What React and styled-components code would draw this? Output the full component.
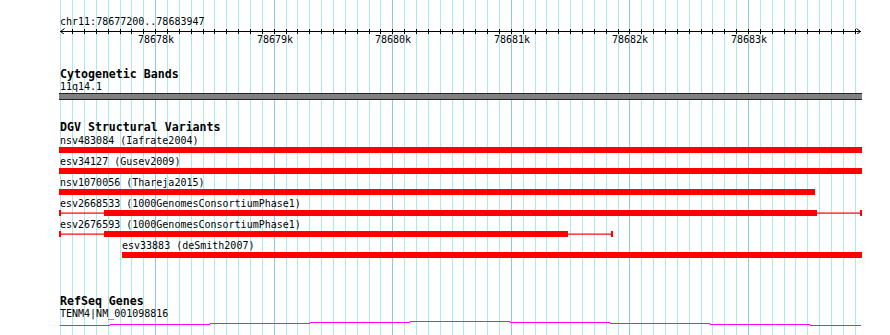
import React from 'react'
import styled, { createGlobalStyle } from 'styled-components'

const START = 78677200
const END = 78683947
const PX_PER_100 = 11.857

const GlobalStyle = createGlobalStyle`
  html, body { margin: 0; padding: 0; background: #fff; }
`

const Page = styled.div`
  position: relative;
  width: 890px;
  height: 335px;
  overflow: hidden;
  background: #fff;
  font-family: "DejaVu Sans Mono", "Liberation Mono", monospace;
  font-size: 10px;
  color: #000;
`
const Grid = styled.svg`
  position: absolute;
  left: 0;
  top: 0;
  z-index: 0;
`
const Content = styled.div`
  position: relative;
  z-index: 1;
  display: flex;
  flex-direction: column;
  padding: 16px 0 0 59px;
  width: 803px;
`
const Locus = styled.div`
  line-height: 12px;
  height: 12px;
  padding-left: 1px;
  white-space: nowrap;
`
const Axis = styled.svg`
  display: block;
`
const ScaleLabels = styled.div`
  position: relative;
  height: 12px;
  line-height: 12px;
`
const ScaleLabel = styled.span`
  position: absolute;
  top: 0;
  width: 36px;
  text-align: center;
  white-space: nowrap;
`
const Track = styled.section`
  display: flex;
  flex-direction: column;
  margin-top: ${p => p.$gap}px;
`
const TrackTitle = styled.h3`
  margin: 0;
  padding-left: 1px;
  font-size: 11.6px;
  font-weight: bold;
  line-height: 14px;
  height: 14px;
  white-space: nowrap;
`
const Feature = styled.div`
  display: flex;
  flex-direction: column;
  padding-bottom: ${p => p.$after || 0}px;
`
const FeatureLabel = styled.div`
  line-height: 12px;
  height: 12px;
  padding-left: ${p => 1 + (p.$indent || 0)}px;
  white-space: nowrap;
`
const BandBar = styled.div`
  height: 5px;
  background: #808080;
  border-top: 1px solid #222;
  border-bottom: 1px solid #222;
`
const Glyph = styled.svg`
  display: block;
`

const gridX = k => Math.round(60.3 + k * PX_PER_100)

const Gridlines = () => {
  const lines = []
  for (let k = 0; k <= 67; k++) {
    const major = (START + k * 100) % 1000 === 0
    const x = gridX(k) + 0.5
    lines.push(
      <line key={k} x1={x} x2={x} y1={0} y2={335} stroke={major ? '#8ec6e6' : '#ace8ee'} strokeWidth={1} />
    )
  }
  return (
    <Grid width="890" height="335">
      {lines}
    </Grid>
  )
}

const Ruler = () => {
  const ticks = []
  const labels = []
  for (let k = 1; k <= 67; k++) {
    const x = gridX(k) - 59 + 0.5
    ticks.push(<line key={k} x1={x} x2={x} y1={1} y2={6} stroke="#000" />)
    const bp = START + k * 100
    if (bp % 1000 === 0) {
      labels.push(
        <ScaleLabel key={bp} style={{ left: gridX(k) - 59 - 17 }}>
          {bp / 1000}k
        </ScaleLabel>
      )
    }
  }
  return (
    <>
      <Locus>chr11:{START}..{END}</Locus>
      <Axis width="803" height="6">
        <line x1={1} x2={802} y1={3.5} y2={3.5} stroke="#000" />
        {ticks}
        <polyline points="5.5,0.5 1.5,3.5 5.5,6.5" fill="none" stroke="#000" />
        <polyline points="797.5,0.5 801.5,3.5 797.5,6.5" fill="none" stroke="#000" />
      </Axis>
      <ScaleLabels>{labels}</ScaleLabels>
    </>
  )
}

// pixel spans relative to x=59
const variants = [
  { name: 'nsv483084 (Iafrate2004)', thick: [0, 803] },
  { name: 'esv34127 (Gusev2009)', thick: [0, 803] },
  { name: 'nsv1070056 (Thareja2015)', thick: [0, 756] },
  { name: 'esv2668533 (1000GenomesConsortiumPhase1)', thin: [0, 803], thick: [45, 758] },
  { name: 'esv2676593 (1000GenomesConsortiumPhase1)', thin: [0, 554], thick: [45, 509] },
  { name: 'esv33883 (deSmith2007)', thick: [63, 803], indent: 62 },
]

const VariantGlyph = ({ thin, thick }) => (
  <Glyph width="803" height="6">
    {thin && (
      <>
        <rect x={thin[0]} y={2.5} width={thin[1] - thin[0]} height={1.2} fill="#ff0000" />
        <rect x={thin[0]} y={0} width={2} height={6} fill="#ff0000" />
        <rect x={thin[1] - 2} y={0} width={2} height={6} fill="#ff0000" />
      </>
    )}
    <rect x={thick[0]} y={0} width={thick[1] - thick[0]} height={6} fill="#ff0000" />
  </Glyph>
)

const geneSteps = [
  [1, 51, 324], [51, 151, 323], [151, 251, 322], [251, 351, 321], [351, 451, 320],
  [451, 551, 321], [551, 651, 322], [651, 751, 323], [751, 802, 324],
]

const GeneGlyph = () => {
  const pts = []
  geneSteps.forEach(([a, b, y]) => {
    const yy = y - 319 + 0.5
    pts.push(`${a},${yy}`, `${b},${yy}`)
  })
  return (
    <Glyph width="803" height="7">
      <polyline points={pts.join(' ')} fill="none" stroke="#ff00ff" strokeWidth={1} />
    </Glyph>
  )
}

const App = () => (
  <Page>
    <GlobalStyle />
    <Gridlines />
    <Content>
      <Ruler />
      <Track $gap={21}>
        <TrackTitle>Cytogenetic Bands</TrackTitle>
        <Feature>
          <FeatureLabel>11q14.1</FeatureLabel>
          <BandBar />
        </Feature>
      </Track>
      <Track $gap={20}>
        <TrackTitle>DGV Structural Variants</TrackTitle>
        <div style={{ height: 1 }} />
        {variants.map(v => (
          <Feature key={v.name} $after={3}>
            <FeatureLabel $indent={v.indent}>{v.name}</FeatureLabel>
            <VariantGlyph thin={v.thin} thick={v.thick} />
          </Feature>
        ))}
      </Track>
      <Track $gap={33}>
        <TrackTitle>RefSeq Genes</TrackTitle>
        <Feature>
          <FeatureLabel>TENM4|NM_001098816</FeatureLabel>
          <GeneGlyph />
        </Feature>
      </Track>
    </Content>
  </Page>
)

export default App
